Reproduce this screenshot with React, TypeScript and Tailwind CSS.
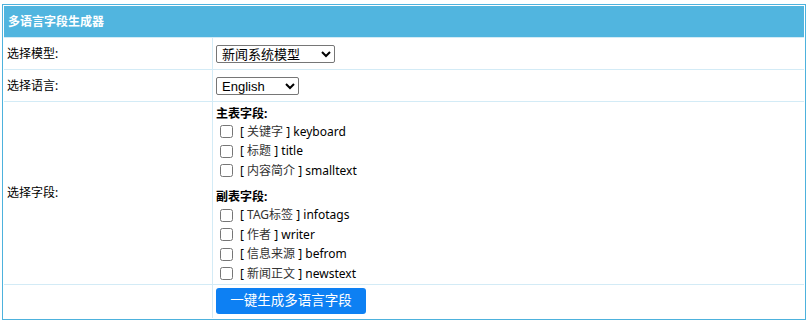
import { useState } from 'react';

const mainFields = [
  { cn: '关键字', en: 'keyboard' },
  { cn: '标题', en: 'title' },
  { cn: '内容简介', en: 'smalltext' },
];

const subFields = [
  { cn: 'TAG标签', en: 'infotags' },
  { cn: '作者', en: 'writer' },
  { cn: '信息来源', en: 'befrom' },
  { cn: '新闻正文', en: 'newstext' },
];

const FieldRow = ({ cn, en }: { cn: string; en: string }) => (
  <label className="flex items-center h-[19.5px] pl-[4px]">
    <input type="checkbox" className="w-[13px] h-[13px] m-0 mr-[7px]" />
    <span>
      [ <span className="text-[#333]">{cn}</span> ] {en}
    </span>
  </label>
);

export default function App() {
  const [model, setModel] = useState('news');
  const [lang, setLang] = useState('en');

  return (
    <div className="w-[809px] h-[323px] bg-white pt-[4px] pl-[2px] text-[12px] text-black font-['Noto_Sans','Noto_Sans_CJK_SC',sans-serif]">
      <div className="w-[804px] border border-[#4db2dd] bg-white p-px">
        {/* title bar */}
        <div className="h-[31px] bg-[#51b5df] flex items-center pl-[4px] text-white font-bold">
          多语言字段生成器
        </div>

        <div className="grid grid-cols-[208px_1fr] gap-px bg-[#d3ebf6] pt-px">
          <div className="bg-white h-[31px] flex items-center pl-[3px]">选择模型:</div>
          <div className="bg-white h-[31px] flex items-center pl-[3px]">
            <select
              value={model}
              onChange={(e) => setModel(e.target.value)}
              className="w-[119px] h-[18px] border border-[#767676] rounded-[2px] bg-white text-[13px] leading-[16px] py-0 pl-px font-['Liberation_Sans','Noto_Sans_CJK_SC',sans-serif]"
            >
              <option value="news">新闻系统模型</option>
            </select>
          </div>

          <div className="bg-white h-[31px] flex items-center pl-[3px]">选择语言:</div>
          <div className="bg-white h-[31px] flex items-center pl-[3px]">
            <select
              value={lang}
              onChange={(e) => setLang(e.target.value)}
              className="w-[83px] h-[18px] border border-[#767676] rounded-[2px] bg-white text-[13px] leading-[16px] py-0 pl-px font-['Liberation_Sans','Noto_Sans_CJK_SC',sans-serif]"
            >
              <option value="en">English</option>
            </select>
          </div>

          <div className="bg-white flex items-center pl-[3px]">选择字段:</div>
          <div className="bg-white pl-[3px] pt-[3px]">
            <div className="h-[17px] flex items-center font-bold">主表字段:</div>
            {mainFields.map((f) => (
              <FieldRow key={f.en} {...f} />
            ))}
            <div className="h-[8px]" />
            <div className="h-[17px] flex items-center font-bold">副表字段:</div>
            {subFields.map((f) => (
              <FieldRow key={f.en} {...f} />
            ))}
          </div>

          <div className="bg-white h-[33px]" />
          <div className="bg-white h-[33px] flex items-center pl-[3px]">
            <button className="w-[150px] h-[26px] rounded-[3px] bg-[#0d80f3] text-white text-[13.5px] leading-none">
              一键生成多语言字段
            </button>
          </div>
        </div>
      </div>
    </div>
  );
}
